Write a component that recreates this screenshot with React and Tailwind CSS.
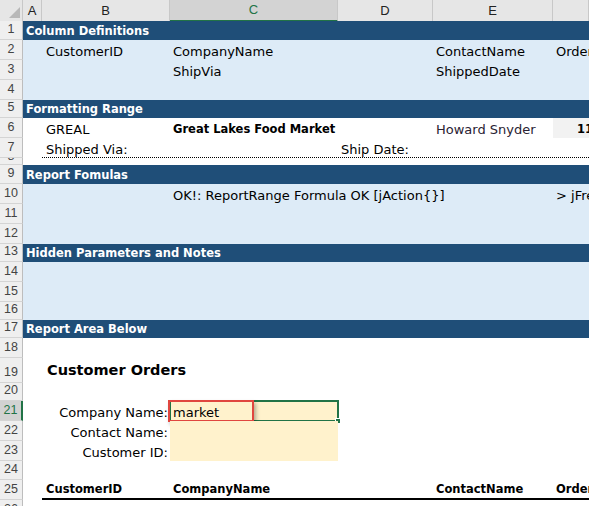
import React from 'react'

const GRID = 'grid grid-cols-[23px_19px_128px_168px_95px_120px_1fr]'

function Row({ n, h, bg = '', sel = false, tiny = false, className = '', children }) {
  return (
    <div className={`${GRID} ${h} relative ${className}`}>
      <div
        className={`col-start-1 row-start-1 flex items-end justify-center overflow-hidden border-b border-b-[#d4d4d4] font-['Liberation_Sans',sans-serif] text-[12.5px] leading-[15px] ${
          tiny ? 'pb-0' : 'pb-[2px]'
        } ${
          sel ? 'bg-[#d2d2d2] text-[#217346] border-r-2 border-r-[#217346]' : 'bg-[#efefef] text-[#444] border-r border-r-[#bdbdbd]'
        }`}
      >
        {n}
      </div>
      <div className={`col-start-2 col-end-8 row-start-1 ${bg}`} />
      {children}
    </div>
  )
}

function Cell({ c, className = '', children }) {
  return (
    <div className={`${c} row-start-1 flex items-end whitespace-nowrap pl-[3px] pb-[1px] leading-[15px] ${className}`}>
      {children}
    </div>
  )
}

function Band({ n, h, children }) {
  return (
    <Row n={n} h={h} bg="bg-[#1f4e78]">
      <Cell c="col-start-2 col-end-8" className="pl-[2px] pb-[1px] text-[11.5px] font-bold leading-[14px] text-white">
        {children}
      </Cell>
    </Row>
  )
}

const LIGHT = 'bg-[#ddebf7]'

function ColHeader() {
  const hd = 'row-start-1 flex items-center justify-center border-r border-r-[#c8c8c8] border-b border-b-[#bdbdbd] bg-[#e6e6e6] text-[13px] text-[#222]'
  return (
    <div className={`${GRID} h-[21px] font-['Liberation_Sans',sans-serif]`}>
      <div className={`col-start-1 ${hd} relative`}>
        <svg className="absolute left-0 top-0" width="23" height="21" viewBox="0 0 23 21">
          <polygon points="20,7 20,18 9,18" fill="#b8b8b8" />
        </svg>
      </div>
      <div className={`col-start-2 ${hd}`}>A</div>
      <div className={`col-start-3 ${hd}`}>B</div>
      <div className="col-start-4 row-start-1 flex items-center justify-center border-r border-r-[#c8c8c8] border-b-2 border-b-[#217346] bg-[#d3d3d3] text-[13px] text-[#217346]">
        C
      </div>
      <div className={`col-start-5 ${hd}`}>D</div>
      <div className={`col-start-6 ${hd}`}>E</div>
      <div className={`col-start-7 ${hd}`}></div>
    </div>
  )
}

export default function App() {
  return (
    <div className="h-[506px] w-[589px] overflow-hidden bg-white font-['DejaVu_Sans',sans-serif] text-[13px] text-black">
      <ColHeader />

      <Band n="1" h="h-[19px]">Column Definitions</Band>
      <Row n="2" h="h-[20px]" bg={LIGHT}>
        <Cell c="col-start-3" className="pl-[4px]">CustomerID</Cell>
        <Cell c="col-start-4">CompanyName</Cell>
        <Cell c="col-start-6" className="pl-[2px]">ContactName</Cell>
        <Cell c="col-start-7">OrderID</Cell>
      </Row>
      <Row n="3" h="h-[20px]" bg={LIGHT}>
        <Cell c="col-start-4">ShipVia</Cell>
        <Cell c="col-start-6" className="pl-[2px]">ShippedDate</Cell>
      </Row>
      <Row n="4" h="h-[20px]" bg={LIGHT} />

      <Band n="5" h="h-[18px]">Formatting Range</Band>
      <Row n="6" h="h-[20px]">
        <Cell c="col-start-3" className="pl-[4px]">GREAL</Cell>
        <Cell c="col-start-4" className="text-[11.5px] font-bold">Great Lakes Food Market</Cell>
        <Cell c="col-start-6" className="pl-[2px] text-[#2a2233]">Howard Snyder</Cell>
        <Cell c="col-start-7" className="bg-[#f2f2f2] pl-[24px] text-[11.5px] font-bold">11077</Cell>
      </Row>
      <Row n="7" h="h-[20px]">
        <div className="col-start-3 col-end-8 row-start-1 border-b border-dotted border-b-black" />
        <Cell c="col-start-3" className="pl-[4px]">Shipped Via:</Cell>
        <Cell c="col-start-5" className="pl-[2px]">Ship Date:</Cell>
      </Row>
      <Row n="8" h="h-[7px]" tiny />

      <Band n="9" h="h-[19px]">Report Fomulas</Band>
      <Row n="10" h="h-[20px]" bg={LIGHT}>
        <Cell c="col-start-4">OK!: ReportRange Formula OK [jAction{'{}'}]</Cell>
        <Cell c="col-start-7">&gt; jFreeze</Cell>
      </Row>
      <Row n="11" h="h-[20px]" bg={LIGHT} />
      <Row n="12" h="h-[20px]" bg={LIGHT} />

      <Band n="13" h="h-[18px]">Hidden Parameters and Notes</Band>
      <Row n="14" h="h-[20px]" bg={LIGHT} />
      <Row n="15" h="h-[20px]" bg={LIGHT} />
      <Row n="16" h="h-[18px]" bg={LIGHT} />

      <Band n="17" h="h-[18px]">Report Area Below</Band>
      <Row n="18" h="h-[20px]" />
      <Row n="19" h="h-[25px]">
        <Cell c="col-start-3 col-end-6" className="pl-[5px] pb-[4px] text-[14.5px] font-bold leading-[17px]">
          Customer Orders
        </Cell>
      </Row>
      <Row n="20" h="h-[18px]" />
      <Row n="21" h="h-[20px]" sel>
        <Cell c="col-start-3" className="justify-end pr-[2px]">Company Name:</Cell>
        <Cell c="col-start-4" className="bg-[#fff2cc]">market</Cell>
        <div className="absolute left-[169px] top-[-1px] h-[22px] w-[170px] border-2 border-[#217346]">
          <div className="absolute bottom-[-4px] right-[-4px] h-[6px] w-[6px] border border-white bg-[#217346]" />
        </div>
        <div className="absolute left-[168px] top-[-1px] h-[22px] w-[86px] border-2 border-[#e0463f] shadow-[2px_3px_4px_rgba(0,0,0,0.3)]" />
      </Row>
      <Row n="22" h="h-[20px]">
        <Cell c="col-start-3" className="justify-end pr-[2px]">Contact Name:</Cell>
        <Cell c="col-start-4" className="bg-[#fff2cc]"></Cell>
      </Row>
      <Row n="23" h="h-[20px]">
        <Cell c="col-start-3" className="justify-end pr-[2px]">Customer ID:</Cell>
        <Cell c="col-start-4" className="bg-[#fff2cc]"></Cell>
      </Row>
      <Row n="24" h="h-[19px]" />
      <Row n="25" h="h-[20px]">
        <div className="col-start-3 col-end-8 row-start-1 border-b-2 border-b-black" />
        <Cell c="col-start-3" className="pl-[4px] pb-[3px] text-[11.5px] font-bold">CustomerID</Cell>
        <Cell c="col-start-4" className="pb-[3px] text-[11.5px] font-bold">CompanyName</Cell>
        <Cell c="col-start-6" className="pl-[2px] pb-[3px] text-[11.5px] font-bold">ContactName</Cell>
        <Cell c="col-start-7" className="pb-[3px] text-[11.5px] font-bold">OrderID</Cell>
      </Row>
      <Row n="26" h="h-[20px]" />
    </div>
  )
}
